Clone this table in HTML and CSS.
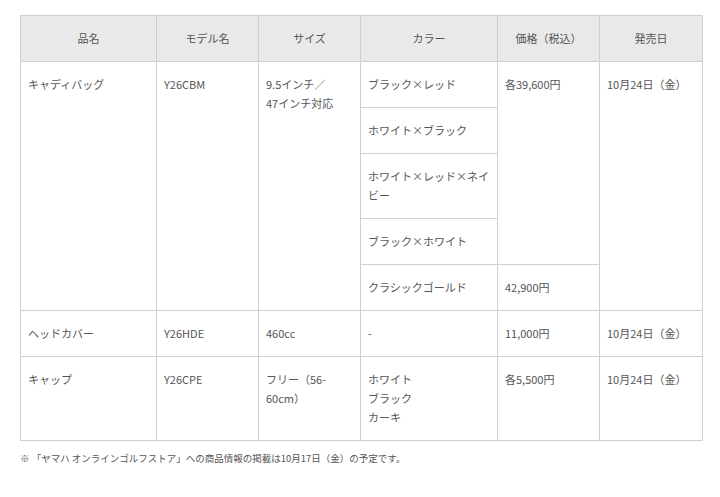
FILE: index.html
```html
<!DOCTYPE html>
<html lang="ja">
<head>
<meta charset="utf-8">
<link rel="stylesheet" href="styles.css">
</head>
<body>
<div class="wrap">
<table class="spec">
<colgroup>
<col class="c1"><col class="c2"><col class="c3"><col class="c4"><col class="c5"><col class="c6">
</colgroup>
<thead>
<tr><th>品名</th><th>モデル名</th><th>サイズ</th><th>カラー</th><th>価格（税込）</th><th>発売日</th></tr>
</thead>
<tbody>
<tr>
<td rowspan="5">キャディバッグ</td>
<td rowspan="5">Y26CBM</td>
<td rowspan="5">9.5インチ／<br>47インチ対応</td>
<td>ブラック×レッド</td>
<td rowspan="4">各39,600円</td>
<td rowspan="5">10月24日（金）</td>
</tr>
<tr><td>ホワイト×ブラック</td></tr>
<tr><td>ホワイト×レッド×ネイビー</td></tr>
<tr><td>ブラック×ホワイト</td></tr>
<tr><td>クラシックゴールド</td><td>42,900円</td></tr>
<tr>
<td>ヘッドカバー</td><td>Y26HDE</td><td>460cc</td><td>-</td><td>11,000円</td><td>10月24日（金）</td>
</tr>
<tr>
<td>キャップ</td><td>Y26CPE</td><td>フリー（56-60cm）</td><td>ホワイト<br>ブラック<br>カーキ</td><td>各5,500円</td><td>10月24日（金）</td>
</tr>
</tbody>
</table>
<p class="note">※&nbsp;「ヤマハ オンラインゴルフストア」への商品情報の掲載は10月17日（金）の予定です。</p>
</div>
</body>
</html>
```
FILE: styles.css
```css
html, body {
  margin: 0;
  padding: 0;
  background: #fff;
}
body {
  font-family: "Noto Sans CJK JP", "Noto Sans", sans-serif;
  color: #555;
}
.wrap {
  padding: 15px 20px 0 20px;
}
.spec {
  border-collapse: collapse;
  table-layout: fixed;
  width: 682px;
  font-size: 11px;
  line-height: 19px;
}
.c1 { width: 136px; }
.c2 { width: 102px; }
.c3 { width: 102px; }
.c4 { width: 137px; }
.c5 { width: 102px; }
.c6 { width: 103px; }
.spec th, .spec td {
  border: 1px solid #cfcfcf;
  padding: 13px 7px 13px 7px;
  vertical-align: top;
  text-align: left;
  font-weight: normal;
}
.spec th {
  background: #e9e9e9;
  text-align: center;
  vertical-align: middle;
}
.note {
  margin: 9px 0 0 0;
  font-size: 9.5px;
  line-height: 16px;
}
```
